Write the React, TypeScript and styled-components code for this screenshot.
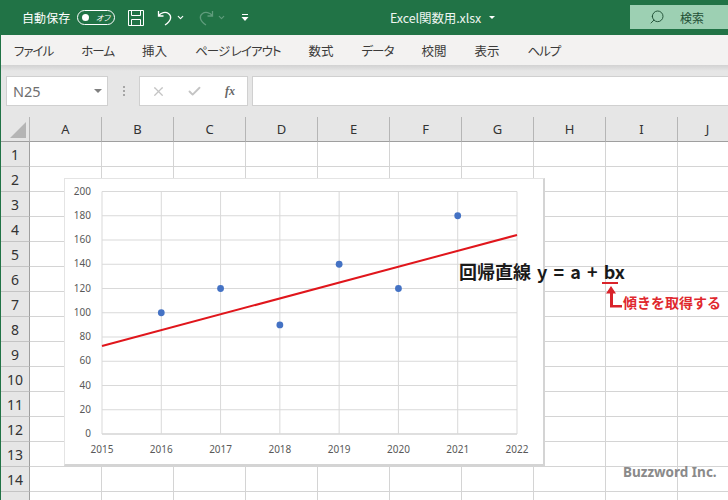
import React from 'react'
import styled, { createGlobalStyle } from 'styled-components'
import { ChevronDown, Search, X, Check } from 'lucide-react'

const jp = `"Noto Sans CJK JP", "Noto Sans", sans-serif`

const GlobalStyle = createGlobalStyle`
  html, body {
    margin: 0;
    padding: 0;
    width: 728px;
    height: 500px;
    overflow: hidden;
    background: #fff;
    font-family: ${jp};
    font-feature-settings: "palt";
  }
`

const Page = styled.div`
  position: relative;
  width: 728px;
  height: 500px;
  overflow: hidden;
  border-left: 1px solid #217346;
  box-sizing: border-box;
`

const TitleBar = styled.div`
  height: 35px;
  margin-left: -1px;
  background: #217346;
  color: #fff;
  display: grid;
  grid-template-columns: 390px 240px 98px;
  align-items: center;
`

const Quick = styled.div`
  display: flex;
  align-items: center;
  padding-left: 22px;
  height: 35px;
`

const AutoSave = styled.span`
  font-size: 12px;
  letter-spacing: 0.1px;
  width: 55px;
  font-feature-settings: normal;
`

const Toggle = styled.div`
  width: 38px;
  height: 15px;
  box-sizing: border-box;
  border: 1px solid #fff;
  border-radius: 8px;
  display: flex;
  align-items: center;
  justify-content: space-between;
  padding: 0 4px;
  font-size: 8px;
  font-style: italic;
  margin-right: 13px;
  &::before {
    content: '';
    width: 7px;
    height: 7px;
    border-radius: 50%;
    background: #fff;
  }
`

const QatIcon = styled.svg<{ $gap?: number }>`
  display: block;
  margin-right: ${({ $gap }) => $gap ?? 0}px;
`

const FileName = styled.div`
  font-size: 12.5px;
  letter-spacing: -0.1px;
  display: flex;
  align-items: center;
  gap: 8px;
  color: #eef5f1;
`

const Caret = styled.span<{ $color?: string; $size?: number }>`
  width: 0;
  height: 0;
  border-left: ${({ $size }) => $size ?? 3}px solid transparent;
  border-right: ${({ $size }) => $size ?? 3}px solid transparent;
  border-top: ${({ $size }) => $size ?? 3}px solid ${({ $color }) => $color ?? '#fff'};
`

const SearchBox = styled.div`
  height: 24px;
  margin-top: -1px;
  background: #9dd0b3;
  color: #1f4f35;
  font-size: 12px;
  display: flex;
  align-items: center;
  padding-left: 19px;
  gap: 15px;
`

const Menu = styled.div`
  height: 30px;
  margin-left: -1px;
  background: #f3f2f1;
  display: flex;
  align-items: center;
  padding-left: 14px;
  gap: 28px;
  font-size: 12.5px;
  color: #3b3a39;
`

const MenuItem = styled.span<{ $tight: boolean }>`
  white-space: nowrap;
  letter-spacing: ${({ $tight }) => ($tight ? '-1px' : '0')};
`

const FormulaBar = styled.div`
  height: 52px;
  box-sizing: border-box;
  background: linear-gradient(#d2d2d2 0, #e6e6e6 6px);
  display: flex;
  align-items: flex-start;
  padding: 11px 0 0 5px;
`

const Field = styled.div`
  height: 30px;
  box-sizing: border-box;
  background: #fff;
  border: 1px solid #d0d0d0;
  display: flex;
  align-items: center;
`

const NameBox = styled(Field)`
  width: 102px;
  padding: 0 5px 0 6px;
  justify-content: space-between;
  color: #6e6e6e;
  font-size: 14.5px;
  font-family: "Noto Sans", sans-serif;
`

const Dots = styled.div`
  width: 31px;
  display: flex;
  flex-direction: column;
  align-items: center;
  gap: 2px;
  padding-top: 10px;
  span {
    width: 2px;
    height: 2px;
    background: #a6a6a6;
  }
`

const Buttons = styled(Field)`
  width: 109px;
  display: grid;
  grid-template-columns: repeat(3, 36px);
  justify-items: center;
  color: #c4c4c4;
  margin-right: 4px;
`

const Fx = styled.i`
  color: #666;
  font: italic bold 12px "Liberation Serif", serif;
`

const Input = styled(Field)`
  flex: 1;
  border-right: none;
`

const Row = styled.div`
  display: grid;
  grid-template-columns: 29px repeat(9, 72px) 60px;
  height: 25px;
  box-sizing: border-box;
`

const Corner = styled.div`
  background: #e6e6e6;
  position: relative;
  border-right: 1px solid #b5b5b5;
  border-bottom: 1px solid #9f9f9f;
  &::after {
    content: '';
    position: absolute;
    right: 3px;
    bottom: 3px;
    border-style: solid;
    border-width: 0 0 16px 16px;
    border-color: transparent transparent #b5b5b5 transparent;
  }
`

const ColHead = styled.div`
  background: #e6e6e6;
  border-right: 1px solid #b5b5b5;
  border-bottom: 1px solid #9f9f9f;
  font: 13px "Noto Sans", sans-serif;
  color: #333;
  display: flex;
  align-items: center;
  justify-content: center;
`

const RowHead = styled(ColHead)`
  border-right: 1px solid #9f9f9f;
  border-bottom: 1px solid #c4c4c4;
  font-size: 14px;
`

const Cell = styled.div`
  border-right: 1px solid #d4d4d4;
  border-bottom: 1px solid #d4d4d4;
`

const ChartCard = styled.div`
  position: absolute;
  left: 63px;
  top: 178px;
  width: 481px;
  height: 288px;
  background: #fff;
  border-right: 2px solid #d4d4d4;
  border-bottom: 2px solid #d4d4d4;
  border-left: 1px solid #e4e4e4;
  border-top: 1px solid #e4e4e4;
  box-sizing: border-box;
`

const Formula = styled.div`
  position: absolute;
  left: 458px;
  top: 259px;
  font: 700 18px/24px ${jp};
  font-feature-settings: normal;
  color: #1a1a1a;
  white-space: nowrap;
  word-spacing: 2px;
`

const Underline = styled.div`
  position: absolute;
  left: 601px;
  top: 282px;
  width: 16px;
  height: 2px;
  background: #d9232a;
`

const Note = styled.div`
  position: absolute;
  left: 622px;
  top: 292px;
  font: 700 14px/20px ${jp};
  font-feature-settings: normal;
  color: #e0282e;
  white-space: nowrap;
`

const Pointer = styled.svg`
  position: absolute;
  left: 603px;
  top: 286px;
`

const Watermark = styled.div`
  position: absolute;
  left: 622px;
  top: 462px;
  font: 700 13.5px/20px "Noto Sans", sans-serif;
  color: #8a8a8a;
`

const columns = ['A', 'B', 'C', 'D', 'E', 'F', 'G', 'H', 'I', 'J']
const menuItems = [
  { label: 'ファイル', tight: true },
  { label: 'ホーム', tight: true },
  { label: '挿入', tight: false },
  { label: 'ページ レイアウト', tight: true },
  { label: '数式', tight: false },
  { label: 'データ', tight: true },
  { label: '校閲', tight: false },
  { label: '表示', tight: false },
  { label: 'ヘルプ', tight: true },
]
const rows = Array.from({ length: 15 }, (_, i) => i + 1)

const points: [number, number][] = [[2016, 100], [2017, 120], [2018, 90], [2019, 140], [2020, 120], [2021, 180]]
const years = [2015, 2016, 2017, 2018, 2019, 2020, 2021, 2022]
const ticks = [0, 20, 40, 60, 80, 100, 120, 140, 160, 180, 200]

// chart coords are relative to the card
const px = (year: number) => 37 + ((year - 2015) / 7) * 415
const py = (v: number) => 255 - (v / 200) * 242.5

const TrendChart = () => (
  <svg width="478" height="285" style={{ display: 'block' }}>
    {ticks.map(t => (
      <line key={t} x1={37} x2={452} y1={py(t)} y2={py(t)} stroke={t === 0 ? '#bfbfbf' : '#d9d9d9'} />
    ))}
    {years.map(y => (
      <line key={y} x1={px(y)} x2={px(y)} y1={py(200)} y2={py(0)} stroke="#d9d9d9" />
    ))}
    {ticks.map(t => (
      <text key={t} x={26} y={py(t) + 3} textAnchor="end" fontSize="10" fill="#595959" fontFamily="Noto Sans, sans-serif">{t}</text>
    ))}
    {years.map(y => (
      <text key={y} x={px(y)} y={274} textAnchor="middle" fontSize="10" fill="#595959" fontFamily="Noto Sans, sans-serif">{y}</text>
    ))}
    <line x1={37} y1={167} x2={452} y2={56} stroke="#e0161c" strokeWidth="2" />
    {points.map(([x, v]) => (
      <circle key={x} cx={px(x)} cy={py(v)} r="3.4" fill="#4472c4" />
    ))}
  </svg>
)

const App = () => (
  <>
    <GlobalStyle />
    <Page>
      <TitleBar>
        <Quick>
          <AutoSave>自動保存</AutoSave>
          <Toggle>オフ</Toggle>
          <QatIcon $gap={13} width="16" height="16" viewBox="0 0 16 16" fill="none" stroke="#fff">
            <path d="M.5.5h15v15H.5zM3.5.5v5h9v-5M3.5 15.5v-6h9v6" />
          </QatIcon>
          <QatIcon $gap={3} width="16" height="16" viewBox="0 0 16 16" fill="none" stroke="#fff" strokeWidth="1.3">
            <path d="M1.5 1v5h5M1.5 6C4 2.5 8.5 1.5 11.5 3.5c3.5 2.5 3 7.5-3.5 11.5" />
          </QatIcon>
          <ChevronDown size={9} color="#fff" strokeWidth={3} style={{ marginRight: 13 }} />
          <QatIcon $gap={3} width="16" height="16" viewBox="0 0 16 16" fill="none" stroke="#5f9c7c" strokeWidth="1.3">
            <path d="M14.5 1v5h-5M14.5 6C12 2.5 7.5 1.5 4.5 3.5 1 6 1.5 11 8 15" />
          </QatIcon>
          <ChevronDown size={9} color="#5f9c7c" strokeWidth={3} style={{ marginRight: 15 }} />
          <QatIcon width="8" height="8" viewBox="0 0 8 8" fill="#fff">
            <path d="M1 0h6v1H1zM.5 3h7L4 7z" />
          </QatIcon>
        </Quick>
        <FileName>Excel関数用.xlsx <Caret /></FileName>
        <SearchBox>
          <Search size={16} strokeWidth={1.4} style={{ transform: 'scaleX(-1)' }} />
          検索
        </SearchBox>
      </TitleBar>
      <Menu>
        {menuItems.map(m => <MenuItem key={m.label} $tight={m.tight}>{m.label}</MenuItem>)}
      </Menu>
      <FormulaBar>
        <NameBox>N25 <Caret $color="#808080" $size={4} /></NameBox>
        <Dots><span /><span /><span /></Dots>
        <Buttons>
          <X size={15} strokeWidth={2} />
          <Check size={15} strokeWidth={3} />
          <Fx>fx</Fx>
        </Buttons>
        <Input />
      </FormulaBar>
      <Row>
        <Corner />
        {columns.map(c => <ColHead key={c}>{c}</ColHead>)}
      </Row>
      {rows.map(r => (
        <Row key={r}>
          <RowHead>{r}</RowHead>
          {columns.map(c => <Cell key={c} />)}
        </Row>
      ))}
      <ChartCard><TrendChart /></ChartCard>
      <Formula>回帰直線 y = a + bx</Formula>
      <Underline />
      <Pointer width="22" height="24" viewBox="0 0 22 24" fill="#d9232a">
        <path d="M7 0l5 7.5H9V19h9v2.5H6V7.5H2z" />
      </Pointer>
      <Note>傾きを取得する</Note>
      <Watermark>Buzzword Inc.</Watermark>
    </Page>
  </>
)

export default App
